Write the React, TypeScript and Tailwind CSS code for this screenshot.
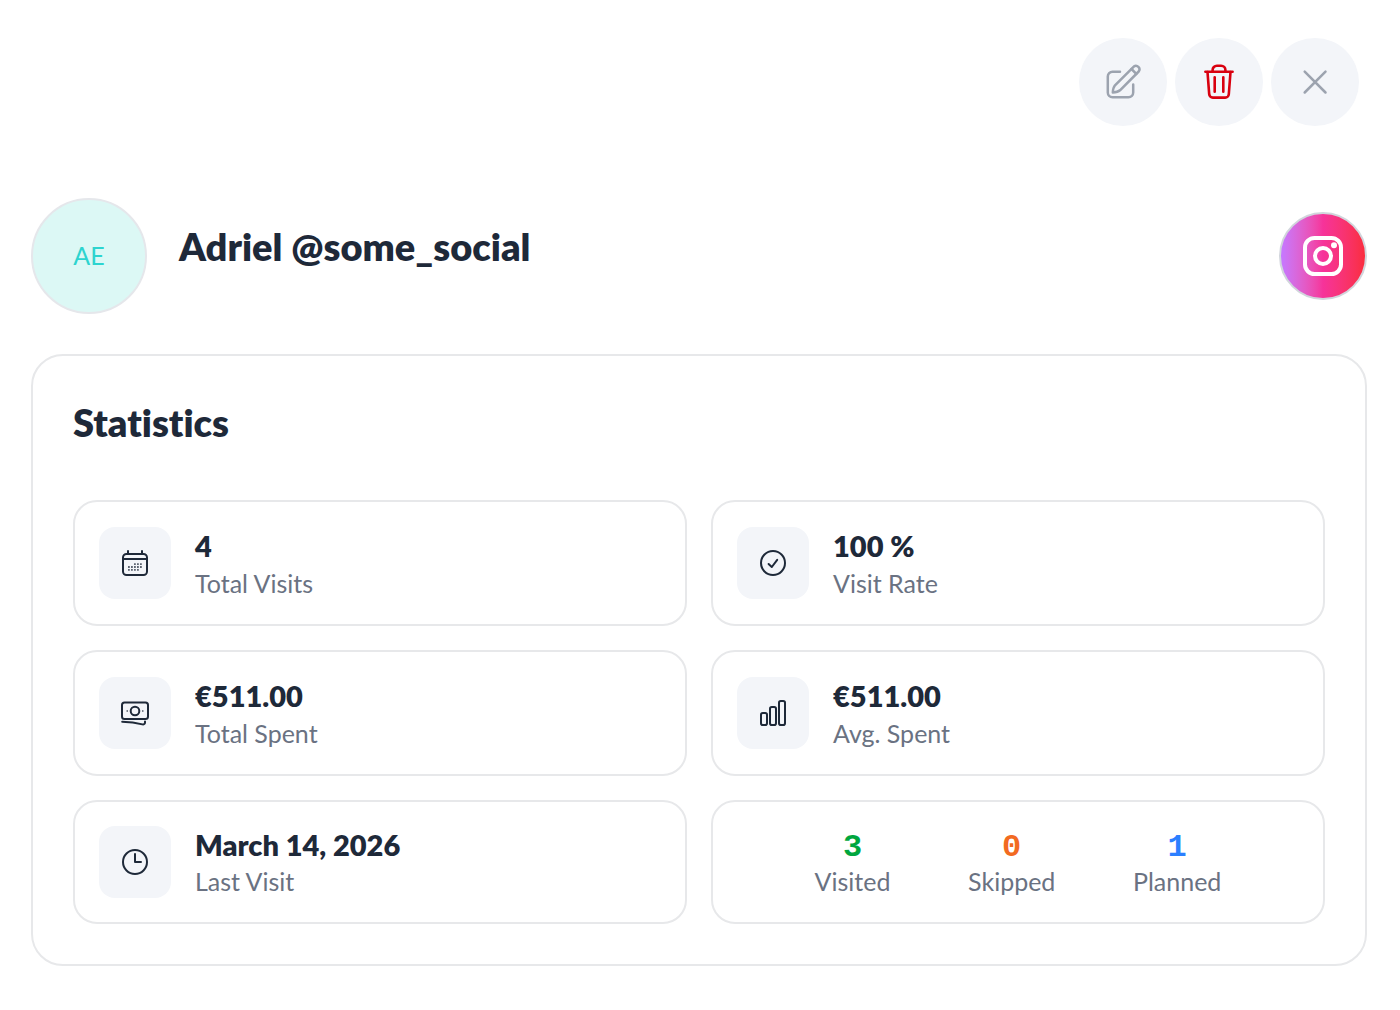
import type { ReactNode } from "react"

type Stat = {
  label: string
  value: string
  icon: ReactNode
}

const iconProps = {
  fill: "none",
  stroke: "currentColor",
  strokeWidth: 2,
  strokeLinecap: "round" as const,
  strokeLinejoin: "round" as const,
  "aria-hidden": true,
}

function EditIcon() {
  return (
    <svg viewBox="0 0 36 36" className="size-9" {...iconProps} strokeWidth={2.5}>
      <path d="M15 7.8H7.5A4.7 4.7 0 0 0 2.8 12.5v16a4.7 4.7 0 0 0 4.7 4.7h16a4.7 4.7 0 0 0 4.7-4.7v-8" />
      <path d="M28.8 2.6a3.5 3.5 0 0 1 4.9 4.9L15 26.3c-1.6 1.4-4.2 2-7.2 2.2.2-3 .8-5.6 2.2-7.2z" />
      <path d="M26.5 5l4.8 4.8" />
    </svg>
  )
}

function TrashIcon() {
  return (
    <svg viewBox="0 0 36 36" className="size-9" {...iconProps} strokeWidth={2.6}>
      <path d="M4.4 7.8h27.2" />
      <path d="M11.6 7.3V6a4.3 4.3 0 0 1 4.3-4.3h4.2A4.3 4.3 0 0 1 24.4 6v1.3" />
      <path d="M6.5 8l1.7 22.2a3.6 3.6 0 0 0 3.6 3.4h12.4a3.6 3.6 0 0 0 3.6-3.4L29.5 8" />
      <path d="M13.7 13.2v14.6M22.3 13.2v14.6" />
    </svg>
  )
}

function CloseIcon() {
  return (
    <svg viewBox="0 0 36 36" className="size-9" {...iconProps} strokeWidth={2.5}>
      <path d="M7.7 7.7l20.8 20.8M28.5 7.7L7.7 28.5" />
    </svg>
  )
}

function InstagramIcon() {
  return (
    <svg viewBox="0 0 40 40" className="size-10" {...iconProps} strokeWidth={4}>
      <rect x="2" y="2" width="36" height="36" rx="9.5" />
      <circle cx="20" cy="20" r="8" />
      <circle cx="31" cy="9.2" r="3" fill="currentColor" stroke="none" />
    </svg>
  )
}

function CalendarIcon() {
  return (
    <svg viewBox="0 0 28 28" className="size-7" {...iconProps}>
      <rect x="2" y="5" width="24" height="21" rx="3.5" />
      <path d="M2 10h24M7 2v3M21 2v3" />
      <g strokeWidth="1.8" strokeLinecap="butt" strokeDasharray="1.8 1.2" opacity="0.7">
        <path d="M13 15.2h7.8" />
        <path d="M7 18h13.8" />
        <path d="M7 20.8h10.8" />
      </g>
    </svg>
  )
}

function CheckCircleIcon() {
  return (
    <svg viewBox="0 0 28 28" className="size-7" {...iconProps}>
      <circle cx="14" cy="14" r="12" />
      <path d="M9.6 15l3.2 3 5.4-7.2" />
    </svg>
  )
}

function CashIcon() {
  return (
    <svg viewBox="0 0 28 28" className="size-7" {...iconProps}>
      <rect x="1" y="3.5" width="26" height="16.5" rx="2.5" />
      <circle cx="14" cy="12" r="4.3" />
      <path d="M6.2 12h.01M21.8 12h.01" strokeWidth="1.6" />
      <path d="M1.2 22.7c7.2 0 14 .9 20.2 2.7 1.4.4 2.6-.6 2.6-2v-1" />
    </svg>
  )
}

function BarsIcon() {
  return (
    <svg viewBox="0 0 28 28" className="size-7" {...iconProps}>
      <rect x="2" y="14" width="6" height="12" rx="1.8" />
      <rect x="11" y="8" width="6" height="18" rx="1.8" />
      <rect x="20" y="2" width="6" height="24" rx="1.8" />
    </svg>
  )
}

function ClockIcon() {
  return (
    <svg viewBox="0 0 28 28" className="size-7" {...iconProps}>
      <circle cx="14" cy="14" r="12" />
      <path d="M14 6v8h6" />
    </svg>
  )
}

const stats: Stat[] = [
  { label: "Total Visits", value: "4", icon: <CalendarIcon /> },
  { label: "Visit Rate", value: "100 %", icon: <CheckCircleIcon /> },
  { label: "Total Spent", value: "€511.00", icon: <CashIcon /> },
  { label: "Avg. Spent", value: "€511.00", icon: <BarsIcon /> },
]

const visits = [
  { label: "Visited", count: 3, color: "text-green-600" },
  { label: "Skipped", count: 0, color: "text-[#f26a21]" },
  { label: "Planned", count: 1, color: "text-blue-500" },
]

function IconTile({ children }: { children: ReactNode }) {
  return (
    <div className="flex size-18 shrink-0 items-center justify-center rounded-2xl bg-[#f3f5f9]">
      {children}
    </div>
  )
}

export default function App() {
  return (
    <main className="min-h-screen bg-white pt-[38px] pr-[33px] pb-11 pl-[31px] font-['Lato',sans-serif] text-gray-800 [font-variant-ligatures:none]">
      {/* Actions */}
      <div className="flex justify-end gap-2 pr-2 text-[#9ca3af]">
        <button aria-label="Edit" className="flex size-22 items-center justify-center rounded-full bg-[#f3f5f9]">
          <EditIcon />
        </button>
        <button aria-label="Delete" className="flex size-22 items-center justify-center rounded-full bg-[#f3f5f9] text-[#d9000f]">
          <TrashIcon />
        </button>
        <button aria-label="Close" className="flex size-22 items-center justify-center rounded-full bg-[#f3f5f9]">
          <CloseIcon />
        </button>
      </div>

      {/* Client */}
      <header className="mt-18 flex items-center gap-8">
        <div className="flex size-29 shrink-0 items-center justify-center rounded-full border-2 border-gray-200 bg-[#dcf8f5] text-[25px] text-[#2dd4cf]">
          AE
        </div>
        <h1 className="flex-1 pb-5 text-[38px] leading-10 font-extrabold">Adriel @some_social</h1>
        <a
          href="#instagram"
          aria-label="Instagram"
          className="flex size-22 items-center justify-center rounded-full border-2 border-gray-300 bg-linear-to-r from-purple-400 via-pink-500 to-red-500 bg-origin-border text-white"
        >
          <InstagramIcon />
        </a>
      </header>

      <section className="mt-10 rounded-[32px] border-2 border-[#e7e8ea] p-10">
        <h2 className="mb-13 text-[38px] leading-13 font-extrabold">Statistics</h2>

        <div className="grid grid-cols-2 gap-6">
          {stats.map((stat) => (
            <div key={stat.label} className="flex items-center gap-6 rounded-3xl border-2 border-[#e7e8ea] p-6">
              <IconTile>{stat.icon}</IconTile>
              <div>
                <p className="text-[29px] leading-10 font-extrabold">{stat.value}</p>
                <p className="text-[25px] leading-[34px] text-gray-500">{stat.label}</p>
              </div>
            </div>
          ))}

          <div className="flex items-center gap-6 rounded-3xl border-2 border-[#e7e8ea] p-6">
            <IconTile>
              <ClockIcon />
            </IconTile>
            <div>
              <p className="text-[29px] leading-[38px] font-extrabold">March 14, 2026</p>
              <p className="text-[25px] leading-[34px] text-gray-500">Last Visit</p>
            </div>
          </div>

          <div className="flex items-center justify-evenly rounded-3xl border-2 border-[#e7e8ea] p-6 text-center">
            {visits.map((item) => (
              <div key={item.label}>
                <p className={`pt-1.5 font-['Liberation_Mono',monospace] text-[32px] leading-8 font-bold ${item.color}`}>
                  {item.count}
                </p>
                <p className="text-[25px] leading-[34px] text-gray-500">{item.label}</p>
              </div>
            ))}
          </div>
        </div>
      </section>
    </main>
  )
}
